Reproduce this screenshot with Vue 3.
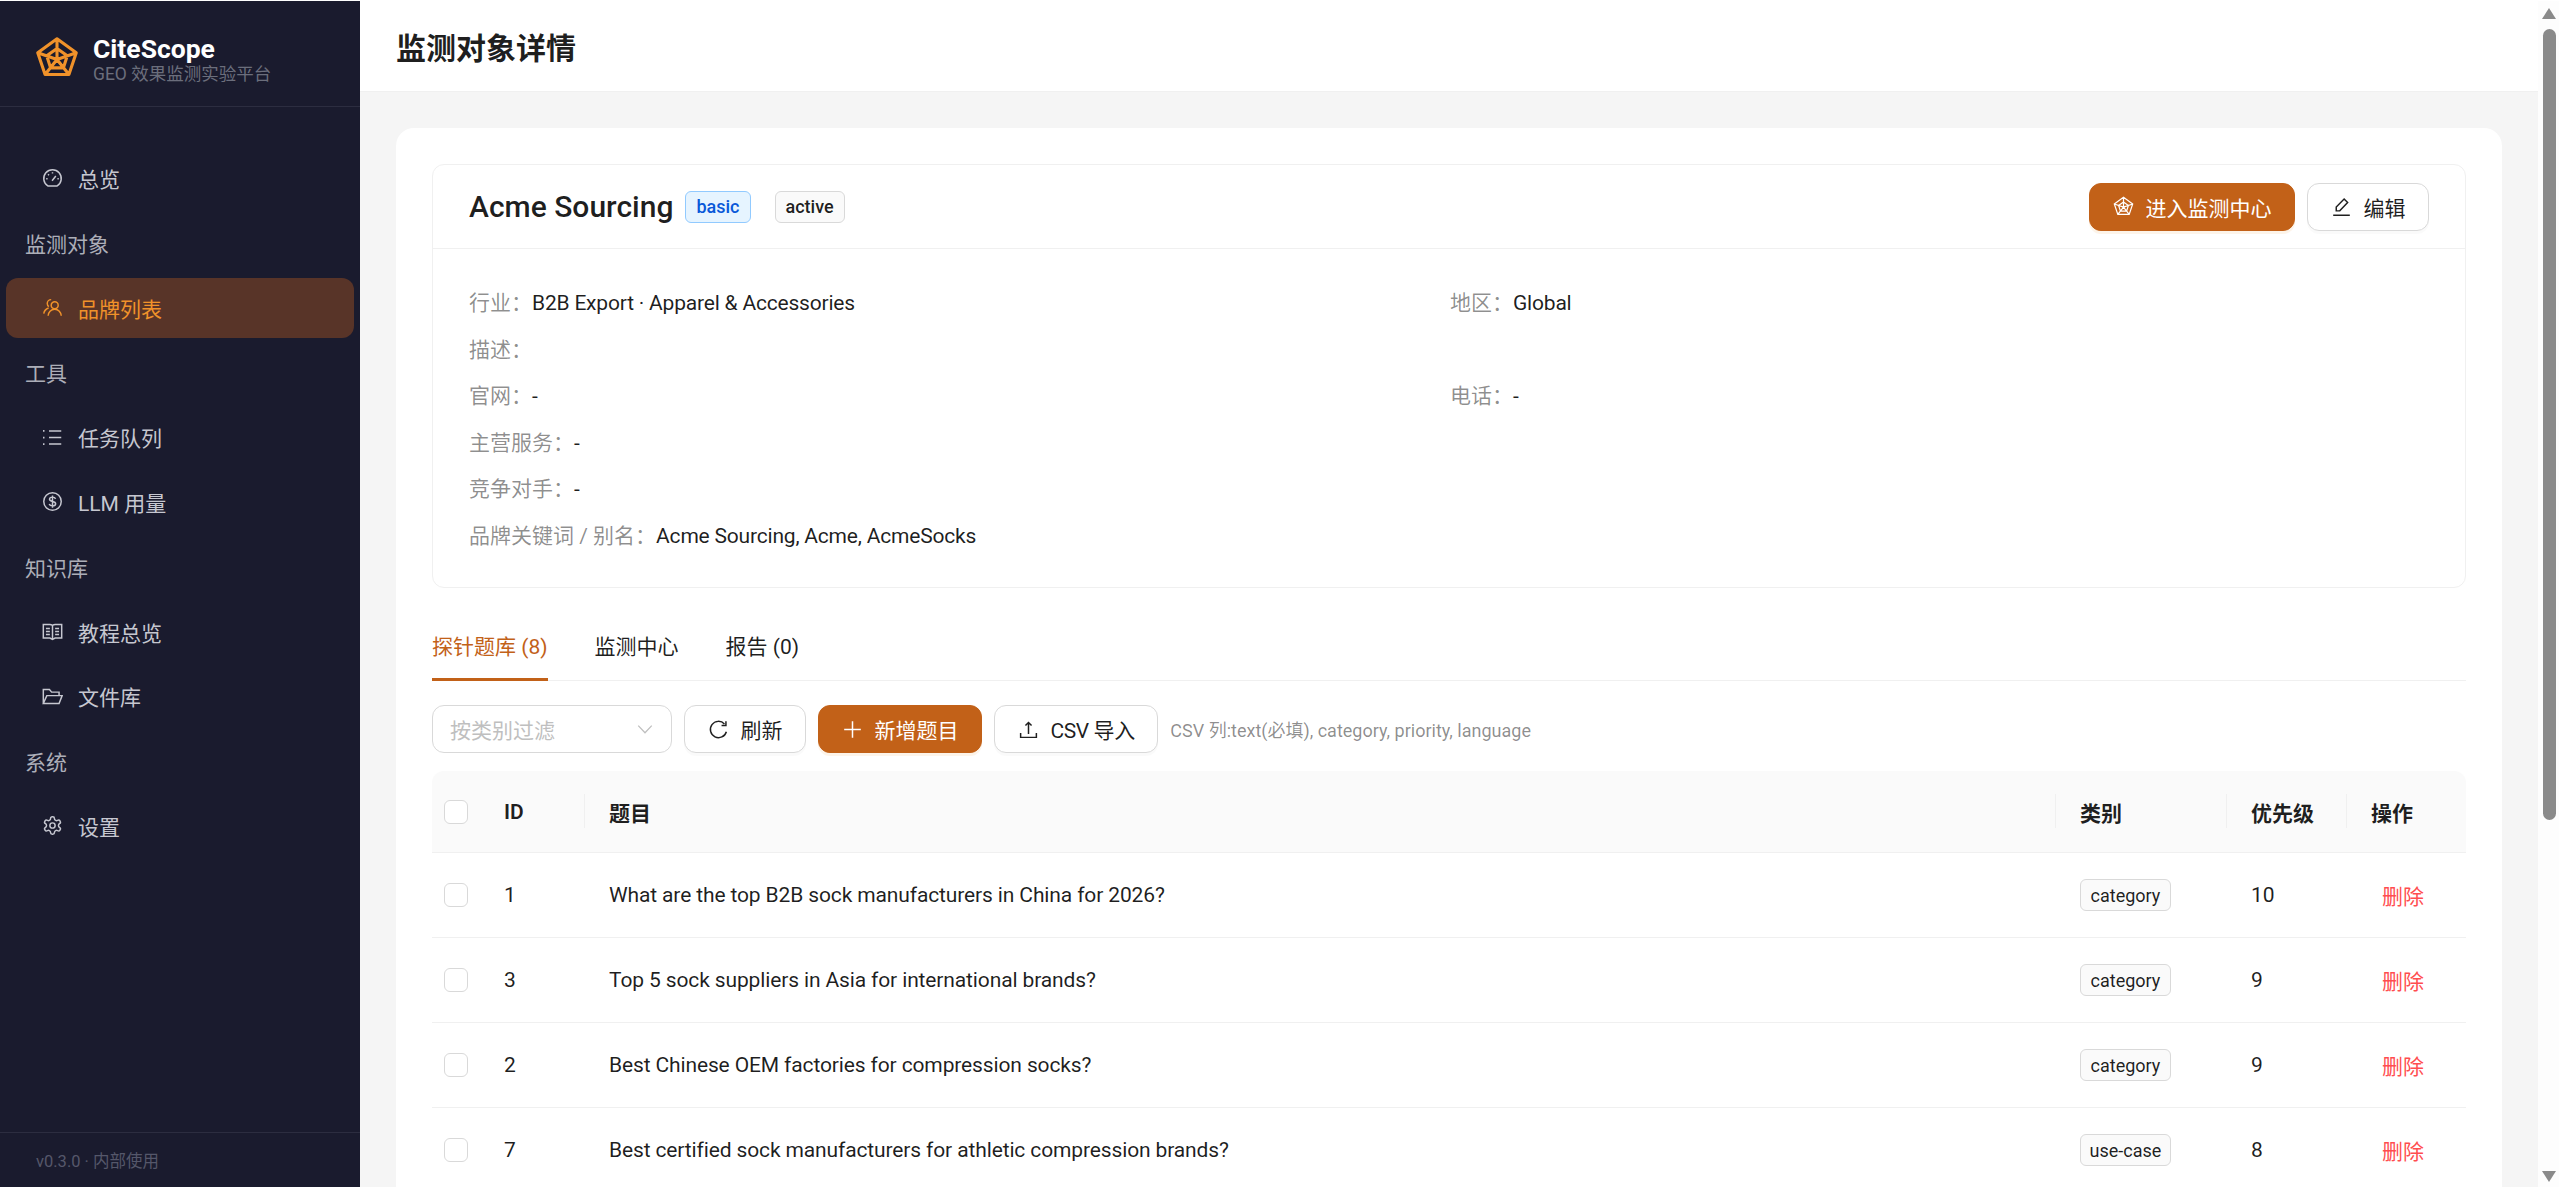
<template>
  <div class="app">
    <aside class="sidebar">
      <div class="brand">
        <svg class="brand-logo" viewBox="0 0 24 24"><path :d="icons.radar" /></svg>
        <div class="brand-text">
          <div class="brand-name">CiteScope</div>
          <div class="brand-sub">GEO 效果监测实验平台</div>
        </div>
      </div>
      <nav class="nav">
        <template v-for="item in navItems" :key="item.label">
          <div v-if="item.group" class="nav-group">{{ item.label }}</div>
          <div v-else class="nav-item" :class="{ active: item.active }">
            <svg class="icon nav-icon" viewBox="0 0 24 24"><path :d="icons[item.icon]" /></svg>
            <span>{{ item.label }}</span>
          </div>
        </template>
      </nav>
      <div class="version">v0.3.0 · 内部使用</div>
    </aside>

    <main class="main">
      <header class="topbar">监测对象详情</header>
      <div class="content">
        <section class="panel">
          <div class="info-card">
            <div class="info-head">
              <h2 class="info-title">Acme Sourcing</h2>
              <span class="tag tag-blue">basic</span>
              <span class="tag tag-plain">active</span>
              <div class="info-actions">
                <button type="button" class="btn btn-primary">
                  <svg class="icon btn-icon thin" viewBox="0 0 24 24"><path :d="icons.radar" /></svg>进入监测中心
                </button>
                <button type="button" class="btn">
                  <svg class="icon btn-icon" viewBox="0 0 24 24"><path :d="icons.edit" /></svg>编辑
                </button>
              </div>
            </div>
            <div class="info-body">
              <div v-for="row in infoRows" :key="row.label" class="info-row" :class="{ wide: row.wide }">
                <span class="info-label">{{ row.label }}</span><span class="info-value">{{ row.value }}</span>
              </div>
            </div>
          </div>

          <div class="tabs">
            <div class="tab active">探针题库 (8)</div>
            <div class="tab">监测中心</div>
            <div class="tab">报告 (0)</div>
          </div>

          <div class="toolbar">
            <div class="select">
              <span>按类别过滤</span>
              <svg class="icon caret" viewBox="0 0 24 24"><path :d="icons.caret" /></svg>
            </div>
            <button type="button" class="btn">
              <svg class="icon btn-icon" viewBox="0 0 24 24"><path :d="icons.reload" /></svg>刷新
            </button>
            <button type="button" class="btn btn-primary">
              <svg class="icon btn-icon" viewBox="0 0 24 24"><path :d="icons.plus" /></svg>新增题目
            </button>
            <button type="button" class="btn btn-csv">
              <svg class="icon btn-icon" viewBox="0 0 24 24"><path :d="icons.upload" /></svg>CSV 导入
            </button>
            <span class="hint">CSV 列:text(必填), category, priority, language</span>
          </div>

          <table class="table">
            <colgroup>
              <col style="width: 48px" />
              <col style="width: 105px" />
              <col />
              <col style="width: 171px" />
              <col style="width: 120px" />
              <col style="width: 119px" />
            </colgroup>
            <thead>
              <tr>
                <th class="check-cell"><span class="checkbox"></span></th>
                <th class="sep">ID</th>
                <th class="sep">题目</th>
                <th class="sep">类别</th>
                <th class="sep">优先级</th>
                <th>操作</th>
              </tr>
            </thead>
            <tbody>
              <tr v-for="row in questions" :key="row.id">
                <td class="check-cell"><span class="checkbox"></span></td>
                <td>{{ row.id }}</td>
                <td class="q-text">{{ row.text }}</td>
                <td><span class="tag tag-plain tag-cat">{{ row.category }}</span></td>
                <td>{{ row.priority }}</td>
                <td class="del-cell"><span class="del">删除</span></td>
              </tr>
            </tbody>
          </table>
        </section>
      </div>
    </main>

    <div class="scrollbar">
      <span class="arrow arrow-up"></span>
      <span class="thumb"></span>
      <span class="arrow arrow-down"></span>
    </div>
  </div>
</template>

<script setup>
const icons = {
  radar: 'M12 1.5L22.5 9.1 18.5 21H5.5L1.5 9.1Z M12 6.8l5.6 4-2.1 6.6h-7l-2.1-6.6Z M12 1.5V12.8 M22.5 9.1 12 12.8 M18.5 21 12 12.8 M5.5 21 12 12.8 M1.5 9.1 12 12.8',
  dashboard: 'M6.7 20.5A10 10 0 1 1 17.3 20.5Z M12 4.8v1.6 M4.8 12.3h1.6 M17.6 12.3h1.6 M6.9 7.2l1.1 1.1 M11.5 14.5 15.8 9.2',
  team: 'M14.5 5.5a4 4 0 1 1 0 8 4 4 0 0 1 0-8Z M7 21.5a7.5 7.5 0 0 1 15 0 M10.5 3A4.5 4.5 0 0 0 6 7.5c0 1.5.7 2.8 1.8 3.6 M7.5 12.5C4.5 13.5 2.5 16 2 19',
  list: 'M8 4.5h14 M8 12h14 M8 19.5h14 M2 3.5v2 M2 11v2 M2 18.5v2',
  dollar: 'M12 2a10 10 0 1 1 0 20 10 10 0 0 1 0-20Z M15.5 9c-.5-1.3-1.8-2-3.5-2-2 0-3.4 1-3.4 2.5 0 3.5 7 1.6 7 5 0 1.6-1.5 2.5-3.6 2.5-1.9 0-3.3-.8-3.8-2.2 M12 5v14',
  book: 'M1.5 4H9c1.5 0 3 1 3 1s1.5-1 3-1h7.5v15.5H15l-3 1.5-3-1.5H1.5Z M12 5v16 M4.5 8.5H9 M4.5 12H9 M4.5 15.5H9 M15 8.5h4.5 M15 12h4.5 M15 15.5h4.5',
  folder: 'M1.5 20V4h7l2.5 3h8.5v4 M1.5 20h18L23 11H5.5L1.5 20Z',
  gear: 'M12.22 2h-.44a2 2 0 0 0-2 2v.18a2 2 0 0 1-1 1.73l-.43.25a2 2 0 0 1-2 0l-.15-.08a2 2 0 0 0-2.73.73l-.22.38a2 2 0 0 0 .73 2.73l.15.1a2 2 0 0 1 1 1.72v.51a2 2 0 0 1-1 1.74l-.15.09a2 2 0 0 0-.73 2.73l.22.38a2 2 0 0 0 2.73.73l.15-.08a2 2 0 0 1 2 0l.43.25a2 2 0 0 1 1 1.73V20a2 2 0 0 0 2 2h.44a2 2 0 0 0 2-2v-.18a2 2 0 0 1 1-1.73l.43-.25a2 2 0 0 1 2 0l.15.08a2 2 0 0 0 2.73-.73l.22-.39a2 2 0 0 0-.73-2.73l-.15-.08a2 2 0 0 1-1-1.74v-.5a2 2 0 0 1 1-1.74l.15-.09a2 2 0 0 0 .73-2.73l-.22-.38a2 2 0 0 0-2.73-.73l-.15.08a2 2 0 0 1-2 0l-.43-.25a2 2 0 0 1-1-1.73V4a2 2 0 0 0-2-2Z M15 12a3 3 0 1 1-6 0 3 3 0 0 1 6 0Z',
  edit: 'M2.5 22h19 M6 17v-4.5L15 3.5 19 7.5 10 17Z',
  reload: 'M21 14.5A9.3 9.3 0 1 1 18.8 5.6 M20.5 2.5v5H15.5',
  plus: 'M12 2.5v19 M2.5 12h19',
  upload: 'M12 4v13 M8.5 7.5 12 4l3.5 3.5 M3 16v5h18v-5',
  caret: 'M3 7.5l9 9.5 9-9.5',
}

const navItems = [
  { label: '总览', icon: 'dashboard' },
  { label: '监测对象', group: true },
  { label: '品牌列表', icon: 'team', active: true },
  { label: '工具', group: true },
  { label: '任务队列', icon: 'list' },
  { label: 'LLM 用量', icon: 'dollar' },
  { label: '知识库', group: true },
  { label: '教程总览', icon: 'book' },
  { label: '文件库', icon: 'folder' },
  { label: '系统', group: true },
  { label: '设置', icon: 'gear' },
]

const infoRows = [
  { label: '行业：', value: 'B2B Export · Apparel & Accessories' },
  { label: '地区：', value: 'Global' },
  { label: '描述：', value: '', wide: true },
  { label: '官网：', value: '-' },
  { label: '电话：', value: '-' },
  { label: '主营服务：', value: '-', wide: true },
  { label: '竞争对手：', value: '-', wide: true },
  { label: '品牌关键词 / 别名：', value: 'Acme Sourcing, Acme, AcmeSocks', wide: true },
]

const questions = [
  { id: 1, text: 'What are the top B2B sock manufacturers in China for 2026?', category: 'category', priority: 10 },
  { id: 3, text: 'Top 5 sock suppliers in Asia for international brands?', category: 'category', priority: 9 },
  { id: 2, text: 'Best Chinese OEM factories for compression socks?', category: 'category', priority: 9 },
  { id: 7, text: 'Best certified sock manufacturers for athletic compression brands?', category: 'use-case', priority: 8 },
]
</script>

<style>
html,
body {
  margin: 0;
  overflow: hidden;
}
</style>

<style scoped>
.app {
  display: flex;
  height: 100vh;
  box-sizing: border-box;
  padding-top: 1px;
  overflow: hidden;
  background: #fff;
  color: rgba(0, 0, 0, 0.88);
  font-family: Roboto, "Noto Sans CJK SC", sans-serif;
  font-size: 21px;
}
.icon {
  fill: none;
  stroke: currentColor;
  stroke-width: 1.7;
  flex: none;
}

/* sidebar */
.sidebar {
  width: 360px;
  flex: none;
  display: flex;
  flex-direction: column;
  background: #1a1b2e;
}
.brand {
  height: 105px;
  flex: none;
  display: flex;
  align-items: center;
  gap: 14px;
  padding-left: 35px;
  border-bottom: 1px solid #2c2d40;
}
.brand-logo {
  width: 44px;
  height: 44px;
  margin-top: 8px;
  fill: none;
  stroke: #f0922a;
  stroke-width: 1.7;
  stroke-linejoin: round;
}
.brand-text {
  padding-top: 10px;
}
.brand-name {
  color: #fff;
  font-size: 26.5px;
  font-weight: 700;
  line-height: 30px;
}
.brand-sub {
  color: #6b6e7c;
  font-size: 17.5px;
  line-height: 20px;
}
.nav {
  flex: 1;
  display: flex;
  flex-direction: column;
  gap: 4.8px;
  padding-top: 41px;
}
.nav-group,
.nav-item {
  height: 60px;
  display: flex;
  align-items: center;
}
.nav-group {
  padding-left: 25px;
  color: #acaeb8;
}
.nav-item {
  margin: 0 6px;
  padding-left: 36px;
  gap: 15px;
  border-radius: 12px;
  color: #c6c7d0;
}
.nav-item.active {
  background: #583428;
  color: #f0922a;
}
.nav-icon {
  width: 21px;
  height: 21px;
}
.version {
  height: 54px;
  flex: none;
  display: flex;
  align-items: center;
  padding-left: 36px;
  border-top: 1px solid #2c2d40;
  color: #55576a;
  font-size: 16.5px;
}

/* main */
.main {
  flex: 1;
  min-width: 0;
  display: flex;
  flex-direction: column;
  background: #f5f5f5;
}
.topbar {
  height: 90px;
  flex: none;
  display: flex;
  align-items: center;
  box-sizing: border-box;
  padding-left: 36px;
  background: #fff;
  font-size: 30px;
  font-weight: 600;
}
.content {
  flex: 1;
  min-height: 0;
  padding: 36px 36px 0;
  border-top: 1px solid #f0f0f0;
  overflow: hidden;
}
.panel {
  height: 1200px;
  box-sizing: border-box;
  padding: 36px;
  background: #fff;
  border-radius: 18px;
}
.info-card {
  border: 1px solid #f0f0f0;
  border-radius: 12px;
}
.info-head {
  height: 83px;
  display: flex;
  align-items: center;
  padding: 0 36px;
  border-bottom: 1px solid #f0f0f0;
}
.info-title {
  margin: 0 12px 0 0;
  font-size: 30px;
  font-weight: 500;
}
.tag {
  box-sizing: border-box;
  height: 32px;
  display: inline-flex;
  align-items: center;
  justify-content: center;
  padding: 0 10px;
  border: 1px solid #d9d9d9;
  border-radius: 6px;
  font-size: 18px;
  font-weight: 500;
  white-space: nowrap;
  background: #fafafa;
}
.tag + .tag {
  margin-left: 24px;
}
.tag-blue {
  background: #e6f4ff;
  border-color: #91caff;
  color: #0958d9;
}
.info-actions {
  margin-left: auto;
  display: flex;
  gap: 12px;
}
.btn {
  box-sizing: border-box;
  height: 48px;
  display: inline-flex;
  align-items: center;
  gap: 12px;
  padding: 0 22.5px;
  border: 1px solid #d9d9d9;
  border-radius: 12px;
  background: #fff;
  color: rgba(0, 0, 0, 0.88);
  font: inherit;
  box-shadow: 0 3px 0 rgba(0, 0, 0, 0.02);
}
.btn-primary {
  border-color: #c26118;
  background: #c26118;
  color: #fff;
  box-shadow: 0 3px 0 rgba(240, 146, 42, 0.1);
}
.btn-csv {
  letter-spacing: -0.4px;
}
.btn-icon {
  width: 21px;
  height: 21px;
}
.btn-icon.thin {
  stroke-width: 1.4;
}
.info-body {
  display: grid;
  grid-template-columns: 981px 1fr;
  grid-auto-rows: 46.5px;
  padding: 31px 36px 28px;
}
.info-row {
  display: flex;
  align-items: baseline;
  line-height: 46.5px;
}
.info-row.wide {
  grid-column: 1 / -1;
}
.info-label {
  color: rgba(0, 0, 0, 0.45);
}
.info-value {
  letter-spacing: -0.2px;
}

/* tabs */
.tabs {
  margin-top: 35px;
  display: flex;
  gap: 47px;
  border-bottom: 1px solid #f0f0f0;
}
.tab {
  padding: 8px 0 14px;
  line-height: 33px;
  border-bottom: 3px solid transparent;
  margin-bottom: -1px;
}
.tab.active {
  color: #c26118;
  border-bottom-color: #c26118;
}

/* toolbar */
.toolbar {
  margin-top: 24px;
  display: flex;
  align-items: center;
  gap: 12px;
}
.select {
  box-sizing: border-box;
  width: 240px;
  height: 48px;
  display: flex;
  align-items: center;
  justify-content: space-between;
  padding: 0 17px;
  border: 1px solid #d9d9d9;
  border-radius: 12px;
  color: #bfbfbf;
}
.caret {
  width: 18px;
  height: 18px;
}
.hint {
  color: rgba(0, 0, 0, 0.45);
  font-size: 18px;
}

/* table */
.table {
  width: 100%;
  margin-top: 18px;
  border-collapse: separate;
  border-spacing: 0;
  table-layout: fixed;
}
.table th {
  position: relative;
  height: 81px;
  padding: 0 24px;
  background: #fafafa;
  border-bottom: 1px solid #f0f0f0;
  font-weight: 600;
  text-align: left;
}
.table th:first-child {
  border-top-left-radius: 12px;
}
.table th:last-child {
  border-top-right-radius: 12px;
}
.table th.sep::after {
  content: "";
  position: absolute;
  top: 23px;
  right: 0;
  width: 1px;
  height: 34px;
  background: #f0f0f0;
}
.table td {
  height: 84px;
  padding: 0 24px;
  border-bottom: 1px solid #f0f0f0;
}
.table .check-cell {
  padding: 0 0 0 12px;
}
.checkbox {
  display: block;
  box-sizing: border-box;
  width: 24px;
  height: 24px;
  border: 1px solid #d9d9d9;
  border-radius: 6px;
  background: #fff;
}
.q-text {
  letter-spacing: -0.13px;
}
.tag-cat {
  width: 91px;
  padding: 0;
  font-weight: 400;
}
.table .del-cell {
  padding-left: 35px;
}
.del {
  color: #ff4d4f;
}

/* scrollbar */
.scrollbar {
  width: 21px;
  flex: none;
  position: relative;
  background: #fdfdfd;
}
.thumb {
  position: absolute;
  top: 28px;
  left: 5px;
  width: 13px;
  height: 791px;
  border-radius: 7px;
  background: #8a8a8a;
}
.arrow {
  position: absolute;
  left: 4px;
  width: 0;
  height: 0;
  border-left: 7px solid transparent;
  border-right: 7px solid transparent;
}
.arrow-up {
  top: 7px;
  border-bottom: 11px solid #8a8a8a;
}
.arrow-down {
  bottom: 5px;
  border-top: 11px solid #8a8a8a;
}
</style>
